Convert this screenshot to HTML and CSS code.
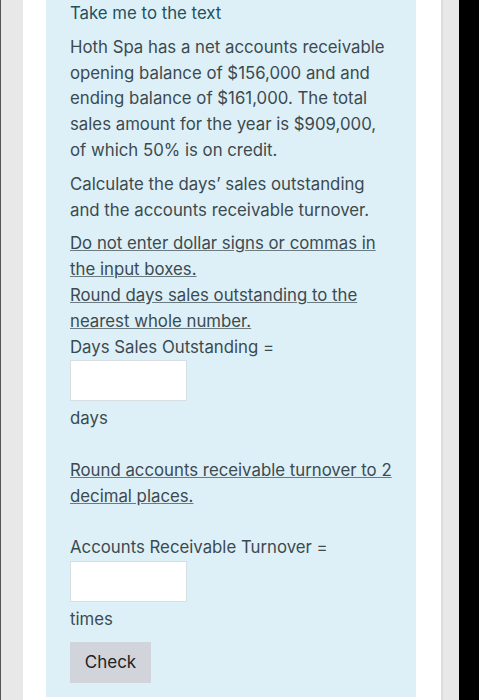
FILE: index.html
```html
<!DOCTYPE html>
<html lang="en">
<head>
    <meta charset="UTF-8">
    <meta name="viewport" content="width=device-width, initial-scale=1.0">
    <title>Accounts Receivable Question</title>
    <link rel="stylesheet" href="styles.css">
</head>
<body>
    <div class="frame">
        <div class="edge"></div>
        <div class="gutter"></div>

        <div class="page">
            <!-- Question panel -->
            <div class="panel">
                <p class="top-link">Take me to the text</p>

                <p>Hoth Spa has a net accounts receivable opening balance of $156,000 and and ending balance of $161,000. The total sales amount for the year is $909,000, of which 50% is on credit.</p>

                <p>Calculate the days’ sales outstanding and the accounts receivable turnover.</p>

                <p class="answer">
                    <u>Do not enter dollar signs or commas in the input boxes.</u><br>
                    <u>Round days sales outstanding to the nearest whole number.</u><br>
                    Days Sales Outstanding =<br>
                    <input type="text" class="box"><br>
                    days<br>
                    <br>
                    <u>Round accounts receivable turnover to 2 decimal places.</u><br>
                    <br>
                    Accounts Receivable Turnover =<br>
                    <input type="text" class="box"><br>
                    times
                </p>

                <button class="check">Check</button>
            </div>
        </div>

        <div class="gutter gutter-right"></div>
        <div class="black"></div>
    </div>
</body>
</html>
```

FILE: styles.css
```css
body {
    margin: 0;
    height: 700px;
    overflow: hidden;
    font-family: Inter, "Liberation Sans", sans-serif;
}

.frame {
    display: flex;
    height: 700px;
}

.edge {
    width: 1px;
    background: #555;
}

.gutter {
    width: 22px;
    background: #e8e8e8;
}

.gutter-right {
    width: 16px;
    border-left: 2px solid #dcdcdc;
}

.black {
    width: 20px;
    background: #000;
}

.page {
    flex: 1;
    background: #fff;
    padding: 0 25px 3px 23px;
}

.panel {
    background: #def0f7;
    height: 100%;
    box-sizing: border-box;
    padding: 1px 20px 0 24px;
    color: #3b4a50;
    font-size: 16.8px;
    line-height: 25.8px;
}

.panel p {
    margin: 0 0 8px;
}

.top-link {
    color: #21505f;
}

.panel u {
    text-decoration-color: #6b7b82;
}

.box {
    width: 117px;
    height: 41px;
    box-sizing: border-box;
    margin: 0 0 5px;
    border: 1px solid #d8dfe2;
    background: #fff;
    vertical-align: top;
}

.check {
    margin-top: 1px;
    width: 81px;
    height: 41px;
    border: none;
    background: #d1d4da;
    color: #222;
    font-family: inherit;
    font-size: 17px;
}
```
